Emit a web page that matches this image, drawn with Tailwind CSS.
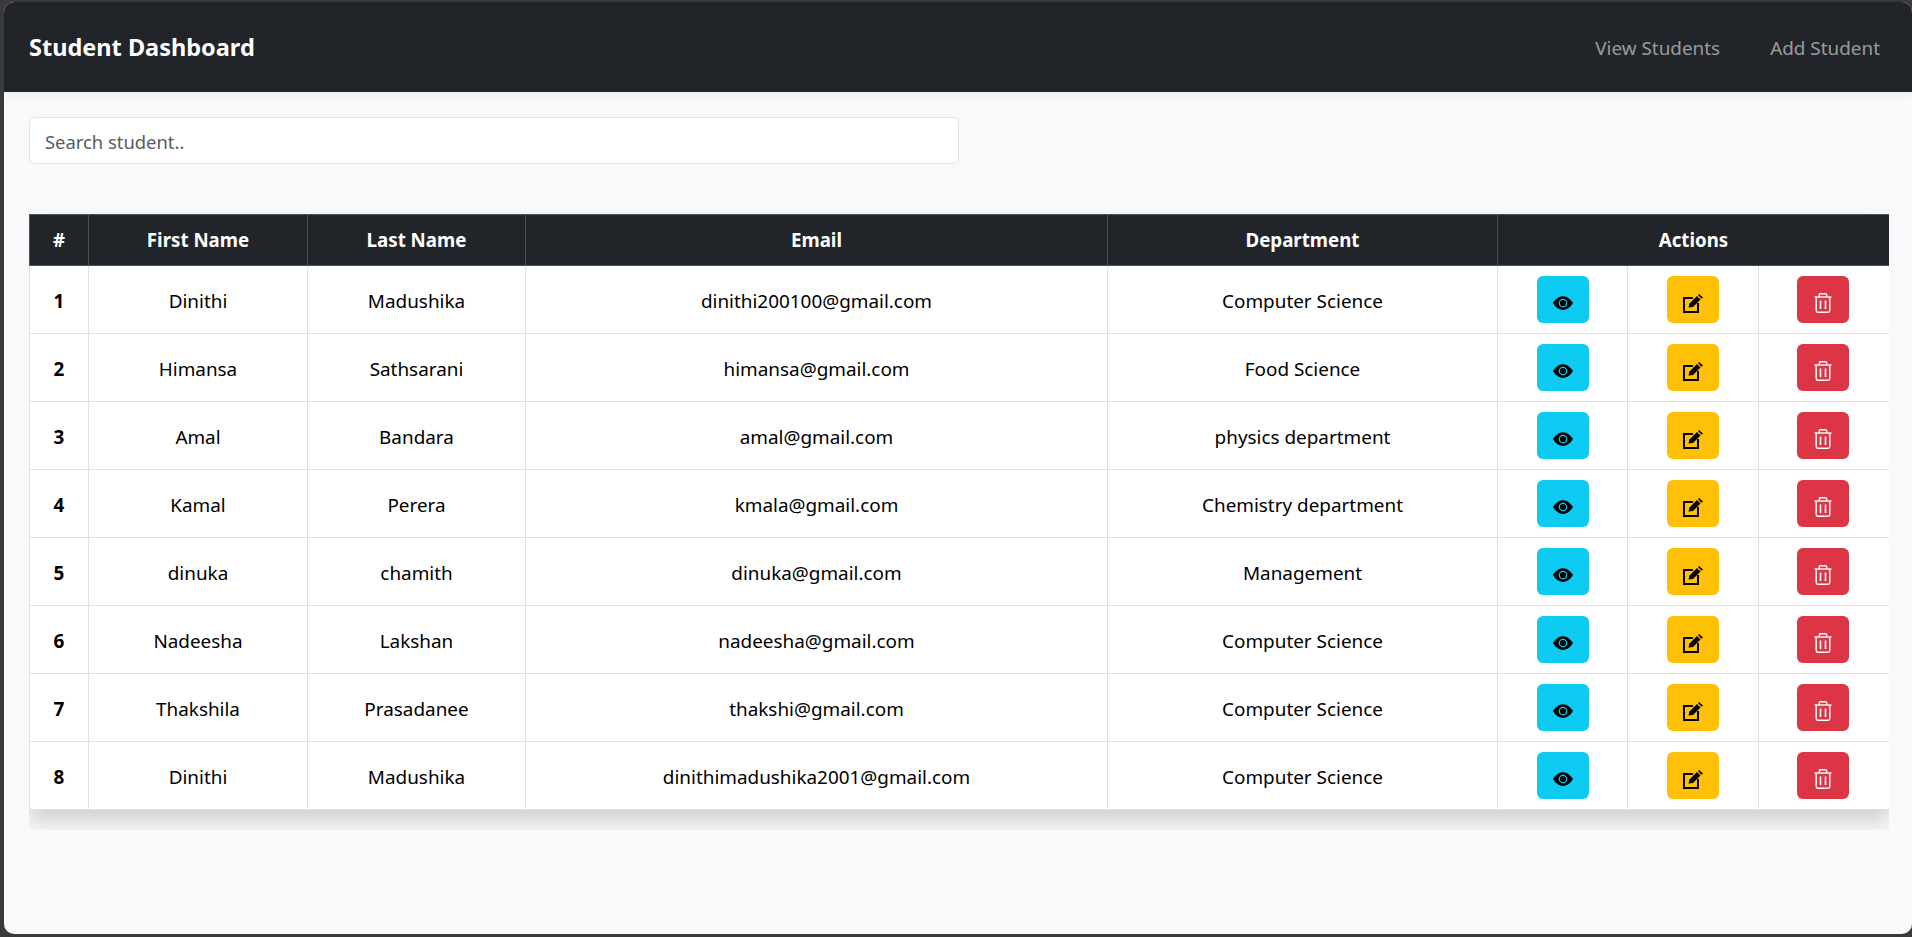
<!DOCTYPE html>
<html lang="en">
<head>
  <meta charset="UTF-8" />
  <title>Student Dashboard</title>
  <script src="https://cdn.jsdelivr.net/npm/@tailwindcss/browser@4"></script>
</head>
<body class="h-[937px] overflow-hidden bg-[#3a3a3a] pl-[4px] pt-[2px] pb-[3px] font-['Noto_Sans',sans-serif] text-[18.9px] text-black">

  <!-- icons -->
  <svg class="hidden">
    <symbol id="eye" viewBox="0 0 16 16">
      <path fill="currentColor" d="M10.5 8a2.5 2.5 0 1 1-5 0 2.5 2.5 0 0 1 5 0"/>
      <path fill="currentColor" d="M0 8s3-5.5 8-5.5S16 8 16 8s-3 5.5-8 5.5S0 8 0 8m8 3.5a3.5 3.5 0 1 0 0-7 3.5 3.5 0 0 0 0 7"/>
    </symbol>
    <symbol id="edit" viewBox="0 0 20 19">
      <path fill="none" stroke="currentColor" stroke-width="2" d="M10 4H1v14h14V9"/>
      <path fill="currentColor" d="M5.5 13.5 6.5 9.5 14 2 17.500 5.500 10 13Z"/>
      <path fill="currentColor" d="M15 1 16 0 20 3.500 18.500 4.800Z"/>
    </symbol>
    <symbol id="trash" viewBox="0 0 18 20">
      <g fill="none" stroke="currentColor" stroke-width="1.4">
        <path d="M.5 4h17"/>
        <path d="M5.200 4V2.200C5.200 1.300 5.800.8 6.600.8h4.800c.8 0 1.400.5 1.400 1.400V4"/>
        <path d="M2.200 4v13.600c0 .9.6 1.600 1.500 1.600h10.600c.9 0 1.500-.7 1.500-1.600V4"/>
        <path stroke-width="1.600" d="M6.500 7.500v8.500M11.500 7.500v8.500"/>
      </g>
    </symbol>
  </svg>

  <div class="h-full overflow-hidden rounded-[10px] bg-[#f8f9fa]">
    <!-- navbar -->
    <nav class="flex h-[90px] items-center justify-between bg-[#212529] pl-[25px] pr-[32px] shadow-[0_2px_8px_rgba(0,0,0,0.06)]">
      <a href="#" class="pt-[2px] text-[23.5px] font-bold text-white">Student Dashboard</a>
      <ul class="flex gap-[50px] pt-[3px] text-[rgba(255,255,255,0.55)]">
        <li><a href="#">View Students</a></li>
        <li><a href="#">Add Student</a></li>
      </ul>
    </nav>

    <main class="pl-[25px] pr-[23px]">
      <input type="text" placeholder="Search student.." class="mt-[25px] block h-[47px] w-[930px] rounded-[6px] border border-[#dee2e6] bg-white px-[15px] pt-[2px] text-[18.4px] placeholder:text-[#595c5f]" />

      <!-- table -->
      <div class="mt-[40px] overflow-hidden pt-[10px] pb-[20px]">
        <table class="w-[1860px] table-fixed border-collapse bg-white text-center shadow-[0_12px_20px_rgba(0,0,0,0.16)]">
          <colgroup>
            <col class="w-[59px]" /><col class="w-[219px]" /><col class="w-[218px]" /><col class="w-[582px]" /><col class="w-[390px]" /><col class="w-[130px]" /><col class="w-[131px]" /><col class="w-[131px]" />
          </colgroup>
          <thead class="bg-[#212529] text-[18.7px] font-bold text-white">
            <tr class="h-[51px]">
              <th class="border border-[#4d5154] pt-[1px]">#</th>
              <th class="border border-[#4d5154] pt-[1px]">First Name</th>
              <th class="border border-[#4d5154] pt-[1px]">Last Name</th>
              <th class="border border-[#4d5154] pt-[1px]">Email</th>
              <th class="border border-[#4d5154] pt-[1px]">Department</th>
              <th colspan="3" class="border border-[#4d5154] pt-[1px]">Actions</th>
            </tr>
          </thead>
          <tbody>
            <tr class="h-[68px]">
              <td class="border border-[#dee2e6] pt-[3px] font-bold">1</td>
              <td class="border border-[#dee2e6] pt-[3px]">Dinithi</td>
              <td class="border border-[#dee2e6] pt-[3px]">Madushika</td>
              <td class="border border-[#dee2e6] pt-[3px]">dinithi200100@gmail.com</td>
              <td class="border border-[#dee2e6] pt-[3px]">Computer Science</td>
              <td class="border border-[#dee2e6]"><button class="mx-auto flex h-[47px] w-[52px] items-center justify-center rounded-[6px] bg-[#0dcaf0] pt-[7px] text-black"><svg class="h-[20px] w-[20px]"><use href="#eye" /></svg></button></td>
              <td class="border border-[#dee2e6]"><button class="mx-auto flex h-[47px] w-[52px] items-center justify-center rounded-[6px] bg-[#ffc107] pt-[7px] text-black"><svg class="h-[19px] w-[20px]"><use href="#edit" /></svg></button></td>
              <td class="border border-[#dee2e6] pr-[2px]"><button class="mx-auto flex h-[47px] w-[52px] items-center justify-center rounded-[6px] bg-[#dc3545] pt-[7px] text-white"><svg class="h-[20px] w-[18px]"><use href="#trash" /></svg></button></td>
            </tr>
            <tr class="h-[68px]">
              <td class="border border-[#dee2e6] pt-[3px] font-bold">2</td>
              <td class="border border-[#dee2e6] pt-[3px]">Himansa</td>
              <td class="border border-[#dee2e6] pt-[3px]">Sathsarani</td>
              <td class="border border-[#dee2e6] pt-[3px]">himansa@gmail.com</td>
              <td class="border border-[#dee2e6] pt-[3px]">Food Science</td>
              <td class="border border-[#dee2e6]"><button class="mx-auto flex h-[47px] w-[52px] items-center justify-center rounded-[6px] bg-[#0dcaf0] pt-[7px] text-black"><svg class="h-[20px] w-[20px]"><use href="#eye" /></svg></button></td>
              <td class="border border-[#dee2e6]"><button class="mx-auto flex h-[47px] w-[52px] items-center justify-center rounded-[6px] bg-[#ffc107] pt-[7px] text-black"><svg class="h-[19px] w-[20px]"><use href="#edit" /></svg></button></td>
              <td class="border border-[#dee2e6] pr-[2px]"><button class="mx-auto flex h-[47px] w-[52px] items-center justify-center rounded-[6px] bg-[#dc3545] pt-[7px] text-white"><svg class="h-[20px] w-[18px]"><use href="#trash" /></svg></button></td>
            </tr>
            <tr class="h-[68px]">
              <td class="border border-[#dee2e6] pt-[3px] font-bold">3</td>
              <td class="border border-[#dee2e6] pt-[3px]">Amal</td>
              <td class="border border-[#dee2e6] pt-[3px]">Bandara</td>
              <td class="border border-[#dee2e6] pt-[3px]">amal@gmail.com</td>
              <td class="border border-[#dee2e6] pt-[3px]">physics department</td>
              <td class="border border-[#dee2e6]"><button class="mx-auto flex h-[47px] w-[52px] items-center justify-center rounded-[6px] bg-[#0dcaf0] pt-[7px] text-black"><svg class="h-[20px] w-[20px]"><use href="#eye" /></svg></button></td>
              <td class="border border-[#dee2e6]"><button class="mx-auto flex h-[47px] w-[52px] items-center justify-center rounded-[6px] bg-[#ffc107] pt-[7px] text-black"><svg class="h-[19px] w-[20px]"><use href="#edit" /></svg></button></td>
              <td class="border border-[#dee2e6] pr-[2px]"><button class="mx-auto flex h-[47px] w-[52px] items-center justify-center rounded-[6px] bg-[#dc3545] pt-[7px] text-white"><svg class="h-[20px] w-[18px]"><use href="#trash" /></svg></button></td>
            </tr>
            <tr class="h-[68px]">
              <td class="border border-[#dee2e6] pt-[3px] font-bold">4</td>
              <td class="border border-[#dee2e6] pt-[3px]">Kamal</td>
              <td class="border border-[#dee2e6] pt-[3px]">Perera</td>
              <td class="border border-[#dee2e6] pt-[3px]">kmala@gmail.com</td>
              <td class="border border-[#dee2e6] pt-[3px]">Chemistry department</td>
              <td class="border border-[#dee2e6]"><button class="mx-auto flex h-[47px] w-[52px] items-center justify-center rounded-[6px] bg-[#0dcaf0] pt-[7px] text-black"><svg class="h-[20px] w-[20px]"><use href="#eye" /></svg></button></td>
              <td class="border border-[#dee2e6]"><button class="mx-auto flex h-[47px] w-[52px] items-center justify-center rounded-[6px] bg-[#ffc107] pt-[7px] text-black"><svg class="h-[19px] w-[20px]"><use href="#edit" /></svg></button></td>
              <td class="border border-[#dee2e6] pr-[2px]"><button class="mx-auto flex h-[47px] w-[52px] items-center justify-center rounded-[6px] bg-[#dc3545] pt-[7px] text-white"><svg class="h-[20px] w-[18px]"><use href="#trash" /></svg></button></td>
            </tr>
            <tr class="h-[68px]">
              <td class="border border-[#dee2e6] pt-[3px] font-bold">5</td>
              <td class="border border-[#dee2e6] pt-[3px]">dinuka</td>
              <td class="border border-[#dee2e6] pt-[3px]">chamith</td>
              <td class="border border-[#dee2e6] pt-[3px]">dinuka@gmail.com</td>
              <td class="border border-[#dee2e6] pt-[3px]">Management</td>
              <td class="border border-[#dee2e6]"><button class="mx-auto flex h-[47px] w-[52px] items-center justify-center rounded-[6px] bg-[#0dcaf0] pt-[7px] text-black"><svg class="h-[20px] w-[20px]"><use href="#eye" /></svg></button></td>
              <td class="border border-[#dee2e6]"><button class="mx-auto flex h-[47px] w-[52px] items-center justify-center rounded-[6px] bg-[#ffc107] pt-[7px] text-black"><svg class="h-[19px] w-[20px]"><use href="#edit" /></svg></button></td>
              <td class="border border-[#dee2e6] pr-[2px]"><button class="mx-auto flex h-[47px] w-[52px] items-center justify-center rounded-[6px] bg-[#dc3545] pt-[7px] text-white"><svg class="h-[20px] w-[18px]"><use href="#trash" /></svg></button></td>
            </tr>
            <tr class="h-[68px]">
              <td class="border border-[#dee2e6] pt-[3px] font-bold">6</td>
              <td class="border border-[#dee2e6] pt-[3px]">Nadeesha</td>
              <td class="border border-[#dee2e6] pt-[3px]">Lakshan</td>
              <td class="border border-[#dee2e6] pt-[3px]">nadeesha@gmail.com</td>
              <td class="border border-[#dee2e6] pt-[3px]">Computer Science</td>
              <td class="border border-[#dee2e6]"><button class="mx-auto flex h-[47px] w-[52px] items-center justify-center rounded-[6px] bg-[#0dcaf0] pt-[7px] text-black"><svg class="h-[20px] w-[20px]"><use href="#eye" /></svg></button></td>
              <td class="border border-[#dee2e6]"><button class="mx-auto flex h-[47px] w-[52px] items-center justify-center rounded-[6px] bg-[#ffc107] pt-[7px] text-black"><svg class="h-[19px] w-[20px]"><use href="#edit" /></svg></button></td>
              <td class="border border-[#dee2e6] pr-[2px]"><button class="mx-auto flex h-[47px] w-[52px] items-center justify-center rounded-[6px] bg-[#dc3545] pt-[7px] text-white"><svg class="h-[20px] w-[18px]"><use href="#trash" /></svg></button></td>
            </tr>
            <tr class="h-[68px]">
              <td class="border border-[#dee2e6] pt-[3px] font-bold">7</td>
              <td class="border border-[#dee2e6] pt-[3px]">Thakshila</td>
              <td class="border border-[#dee2e6] pt-[3px]">Prasadanee</td>
              <td class="border border-[#dee2e6] pt-[3px]">thakshi@gmail.com</td>
              <td class="border border-[#dee2e6] pt-[3px]">Computer Science</td>
              <td class="border border-[#dee2e6]"><button class="mx-auto flex h-[47px] w-[52px] items-center justify-center rounded-[6px] bg-[#0dcaf0] pt-[7px] text-black"><svg class="h-[20px] w-[20px]"><use href="#eye" /></svg></button></td>
              <td class="border border-[#dee2e6]"><button class="mx-auto flex h-[47px] w-[52px] items-center justify-center rounded-[6px] bg-[#ffc107] pt-[7px] text-black"><svg class="h-[19px] w-[20px]"><use href="#edit" /></svg></button></td>
              <td class="border border-[#dee2e6] pr-[2px]"><button class="mx-auto flex h-[47px] w-[52px] items-center justify-center rounded-[6px] bg-[#dc3545] pt-[7px] text-white"><svg class="h-[20px] w-[18px]"><use href="#trash" /></svg></button></td>
            </tr>
            <tr class="h-[68px]">
              <td class="border border-[#dee2e6] pt-[3px] font-bold">8</td>
              <td class="border border-[#dee2e6] pt-[3px]">Dinithi</td>
              <td class="border border-[#dee2e6] pt-[3px]">Madushika</td>
              <td class="border border-[#dee2e6] pt-[3px]">dinithimadushika2001@gmail.com</td>
              <td class="border border-[#dee2e6] pt-[3px]">Computer Science</td>
              <td class="border border-[#dee2e6]"><button class="mx-auto flex h-[47px] w-[52px] items-center justify-center rounded-[6px] bg-[#0dcaf0] pt-[7px] text-black"><svg class="h-[20px] w-[20px]"><use href="#eye" /></svg></button></td>
              <td class="border border-[#dee2e6]"><button class="mx-auto flex h-[47px] w-[52px] items-center justify-center rounded-[6px] bg-[#ffc107] pt-[7px] text-black"><svg class="h-[19px] w-[20px]"><use href="#edit" /></svg></button></td>
              <td class="border border-[#dee2e6] pr-[2px]"><button class="mx-auto flex h-[47px] w-[52px] items-center justify-center rounded-[6px] bg-[#dc3545] pt-[7px] text-white"><svg class="h-[20px] w-[18px]"><use href="#trash" /></svg></button></td>
            </tr>
          </tbody>
        </table>
      </div>
    </main>
  </div>
</body>
</html>
